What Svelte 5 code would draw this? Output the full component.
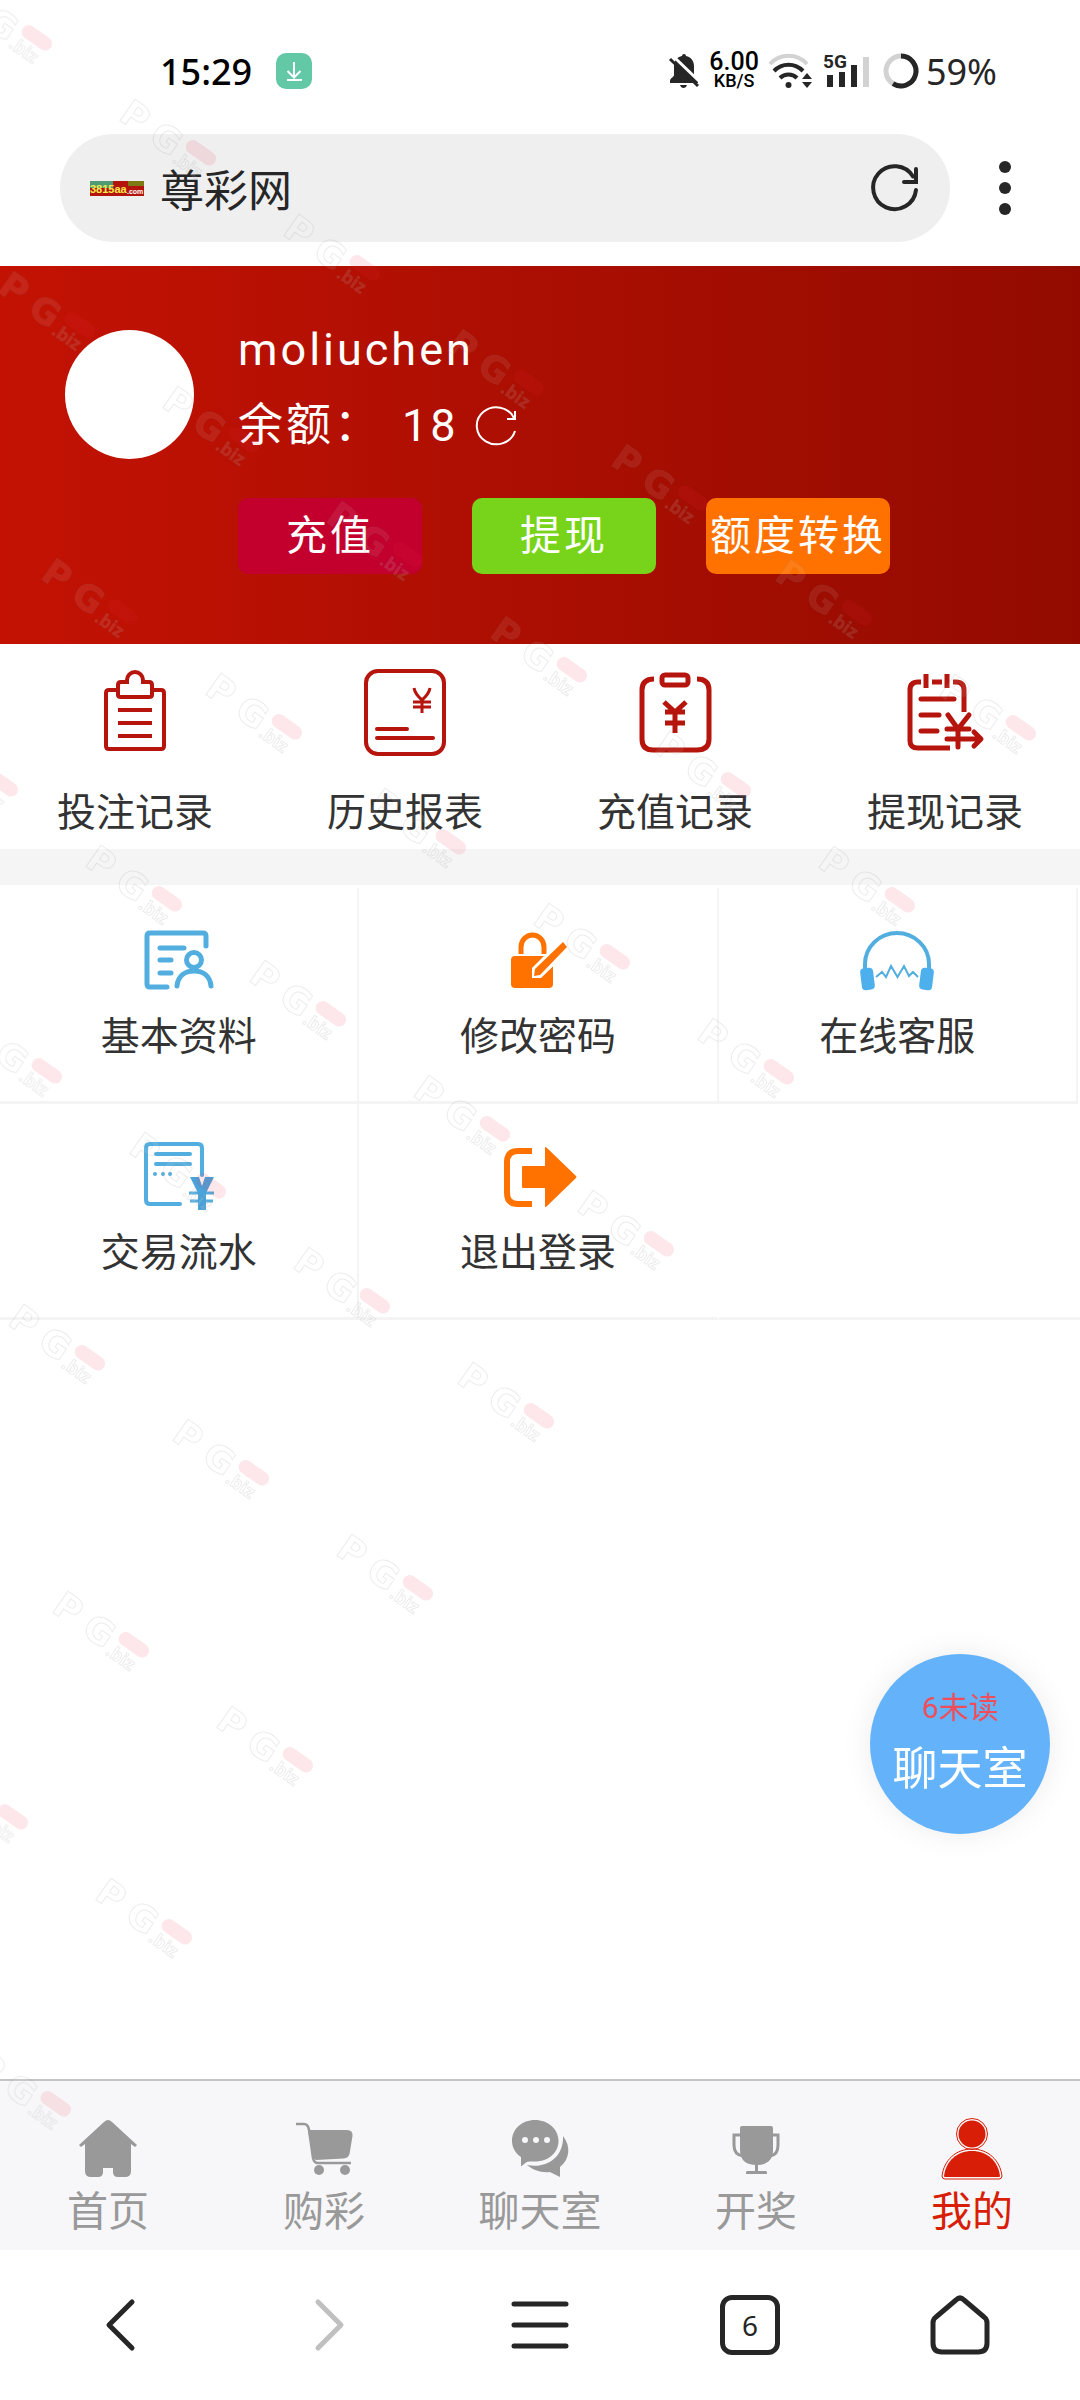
<script lang="ts">
	const username = 'moliuchen';
	const balance = 18;
	const unread = 6;
	const openTabs = 6;

	const actions = [
		{ label: '充值', kind: 'deposit' },
		{ label: '提现', kind: 'withdraw' },
		{ label: '额度转换', kind: 'transfer' }
	];

	const records = [
		{ label: '投注记录', icon: 'bets' },
		{ label: '历史报表', icon: 'report' },
		{ label: '充值记录', icon: 'deposits' },
		{ label: '提现记录', icon: 'withdrawals' }
	];

	const services = [
		{ label: '基本资料', icon: 'profile' },
		{ label: '修改密码', icon: 'password' },
		{ label: '在线客服', icon: 'support' },
		{ label: '交易流水', icon: 'flow' },
		{ label: '退出登录', icon: 'logout' }
	];

	const tabs = [
		{ label: '首页', icon: 'home' },
		{ label: '购彩', icon: 'cart' },
		{ label: '聊天室', icon: 'chat' },
		{ label: '开奖', icon: 'prize' },
		{ label: '我的', icon: 'mine' }
	];
	let current = 'mine';

	// watermark rows: [x, y, how many], every next mark is 164 right and 115 down
	const stampRows = [
		[-43, -12, 7],
		[0, 275, 6],
		[43, 562, 5],
		[-77, 734, 5],
		[-33, 1021, 4],
		[10, 1308, 3],
		[54, 1595, 2],
		[-67, 1767, 2],
		[-24, 2054, 1]
	];
	const stamps = stampRows.flatMap(([x, y, count]) =>
		Array.from({ length: count }, (_, i) => ({ x: x + i * 164, y: y + i * 115 }))
	);
</script>

<div class="page" lang="zh-CN">
	<div class="status">
		<span class="time">15:29</span>
		<svg class="download" width="36" height="36" viewBox="0 0 36 36" aria-hidden="true">
			<rect width="36" height="36" rx="10" fill="#62c8a6" />
			<path d="M18 9v15M11.5 18l6.500 6.500 6.500-6.500M11 27h15" fill="none" stroke="#fff" stroke-width="2" />
		</svg>
		<div class="signals">
			<svg width="32" height="36" viewBox="0 0 32 36" aria-hidden="true">
				<path d="M16 1a2 2 0 0 1 2 2c5 1 8 5 8 10v9c0 2 4 3 4 6v2H2v-2c0-3 4-4 4-6v-9c0-5 3-9 8-10a2 2 0 0 1 2-2zM12 32h7q-1 3-3.500 3t-3.500-3z" fill="#262626" />
				<path d="M5 3l28 27" stroke="#fff" stroke-width="3" />
				<path d="M2 6l28 27" stroke="#262626" stroke-width="3" />
			</svg>
			<div class="speed">
				<span class="rate">6.00</span>
				<span class="unit">KB/S</span>
			</div>
			<svg width="46" height="36" viewBox="0 0 46 36" fill="none" stroke="#262626" stroke-width="4" aria-hidden="true">
				<path d="M2 11a25 25 0 0 1 37 0" stroke="#d2d2d2" />
				<path d="M6 18a20 20 0 0 1 29 0M12 25a12 12 0 0 1 17 0" />
				<circle cx="20.500" cy="32" r="3" fill="#262626" stroke="none" />
				<path d="M34 26l5-6 5 6zM34 29l5 6 5-6z" fill="#262626" stroke="none" />
			</svg>
			<svg width="48" height="36" viewBox="0 0 48 36" aria-hidden="true">
				<text x="0" y="15" class="network">5G</text>
				<path d="M7 22v12M19 19v15M31 12v22" stroke="#262626" stroke-width="6" />
				<path d="M43 4v30" stroke="#d2d2d2" stroke-width="6" />
			</svg>
			<svg class="ring" width="36" height="36" viewBox="0 0 36 36" fill="none" stroke-width="5" aria-hidden="true">
				<circle cx="18" cy="18" r="15" stroke="#d2d2d2" />
				<path d="M18 3a15 15 0 1 1-8 27.700" stroke="#262626" />
			</svg>
			<span class="battery">59%</span>
		</div>
	</div>

	<div class="address">
		<div class="urlbar">
			<svg width="54" height="16" viewBox="0 0 54 16" aria-hidden="true">
				<rect width="54" height="15" y="1" fill="#b3140c" />
				<rect width="23" height="7" y="1" fill="#4f9c74" />
				<rect width="16" height="5" x="38" y="1" fill="#7d7a16" />
				<text x="0" y="13" class="favtext" fill="#f7e948">3815aa</text>
				<text x="37" y="14" class="favsmall" fill="#fff">.com</text>
			</svg>
			<span class="title">尊彩网</span>
			<button class="bare" aria-label="刷新页面">
				<svg width="48" height="48" viewBox="0 0 48 48" fill="none" stroke="#262626" stroke-width="4" stroke-linecap="round">
					<path d="M46 26a21.500 21.500 0 1 1-3-13.500" />
					<path d="M46 5v13H34" />
				</svg>
			</button>
		</div>
		<button class="bare more" aria-label="更多">
			<svg width="12" height="56" viewBox="0 0 12 56" fill="#262626">
				<circle cx="6" cy="7" r="6" />
				<circle cx="6" cy="28" r="6" />
				<circle cx="6" cy="49" r="6" />
			</svg>
		</button>
	</div>

	<header class="user">
		<div class="avatar"></div>
		<div class="info">
			<div class="line">{username}</div>
			<div class="line">
				<span>余额：</span>
				<span class="amount">{balance}</span>
				<button class="bare" aria-label="刷新余额">
					<svg width="42" height="42" viewBox="0 0 42 42" fill="none" stroke="#fff" stroke-width="2">
						<path d="M40 26a19.500 18.500 0 1 1-1-13" />
						<path d="M40 6v8h-8" />
					</svg>
				</button>
			</div>
			<div class="actions">
				{#each actions as action}
					<button class="action {action.kind}">{action.label}</button>
				{/each}
			</div>
		</div>
	</header>

	<nav class="records">
		{#each records as record}
			<a href="#{record.icon}">
				<svg width="84" height="90" viewBox="0 0 84 90" fill="none" stroke="#b5150c" stroke-width="4" aria-hidden="true">
					{#if record.icon === 'bets'}
						<path d="M25 23h-9q-3 0-3 3v53q0 3 3 3h52q3 0 3-3v-53q0-3-3-3h-9" />
						<path d="M34 15h-6q-3 0-3 3v10q0 2 3 2h28q3 0 3-2v-10q0-3-3-3h-6v-2a8 8 0 0 0-16 0z" />
						<path d="M25 43h34M25 56h34M25 69h34" />
					{:else if record.icon === 'report'}
						<rect x="3" y="4" width="78" height="83" rx="12" />
						<path d="M14 62h30M14 71h56" stroke-linecap="round" />
						<path d="M51 21q1 6 8 12 7-6 8-12M59 33v13M50 35h18M50 40h18" stroke-width="3" />
					{:else if record.icon === 'deposits'}
						<g stroke-width="5">
							<path d="M21 12q-12 0-12 11v49q0 11 11 11h44q12 0 12-11v-49q0-11-12-11" />
							<rect x="29" y="8" width="26" height="10" rx="3" />
							<path d="M31 35l11 10 11-10M42 45v21M32 45h20M32 56h20" />
						</g>
					{:else}
						<g stroke-width="5">
							<path d="M18 15h-3q-8 0-8 8v51q0 7 8 7h32M29 15h10M50 15h3q8 0 8 8v22" />
							<path d="M23 7v14M44 7v14" />
							<path d="M18 32h33M18 48h18M18 64h16" stroke-linecap="round" />
							<path d="M45 48l10 14 11-14M55 62v18M44 62h22M44 72h33M71 65l7 7-7 7" stroke-linecap="round" stroke-linejoin="round" />
						</g>
					{/if}
				</svg>
				<span>{record.label}</span>
			</a>
		{/each}
	</nav>

	<nav class="services">
		{#each services as service}
			<a href="#{service.icon}">
				<svg width="84" height="72" viewBox="0 0 84 72" fill="none" stroke="#53aee0" stroke-width="5" aria-hidden="true">
					{#if service.icon === 'profile'}
						<path d="M69 22V12q0-3-3-3H13q-3 0-3 3v48q0 3 3 3h17M23 24h24M23 36h11M23 49h11" stroke-linecap="round" />
						<circle cx="57" cy="36" r="7.500" />
						<path d="M40 62c1-10 8-15 17-15s16 5 17 15" stroke-linecap="round" />
					{:else if service.icon === 'password'}
						<path d="M25 30V23a11.500 12 0 0 1 23 0v7" stroke="#ff7200" />
						<rect x="15" y="32" width="42" height="32" rx="4" fill="#ff7200" stroke="none" />
						<path d="M36 54v-10L65 15l10 10-30 29z" fill="#fff" stroke="none" />
						<path d="M38 52l1-7L67 18l4 5-27 28z" fill="#ff7200" stroke="none" />
					{:else if service.icon === 'support'}
						<path d="M10 46v-6a32 31 0 0 1 64 0v6" stroke-width="4" />
						<rect x="7" y="45" width="11" height="20" rx="3" fill="#4db0ec" stroke="#4db0ec" stroke-width="2" transform="rotate(-7 12 55)" />
						<rect x="66" y="45" width="11" height="20" rx="3" fill="#4db0ec" stroke="#4db0ec" stroke-width="2" transform="rotate(7 72 55)" />
						<path d="M21 53l6-5 4 5 5-11 6.500 11 6.500-11 5 10 4-4 5 5" stroke-width="2" />
					{:else if service.icon === 'flow'}
						<g stroke-width="4">
							<path d="M65 35V8q0-4-4-4H13q-4 0-4 4v52q0 4 4 4h30M19 14h34M19 24h34" stroke-linecap="round" />
							<path d="M52 53h25M53 61h23" stroke-width="3" />
						</g>
						<path d="M53 37h9l3 9 3-9h9l-8 16v17h-8V53z" fill="#4aa3da" stroke="none" />
						<g fill="#53aee0" stroke="none">
							<circle cx="18" cy="34" r="2" />
							<circle cx="26" cy="34" r="2" />
							<circle cx="33" cy="34" r="2" />
						</g>
					{:else}
						<path d="M36 11H22q-11 0-11 11v31q0 11 11 11h14" stroke="#ff7200" stroke-width="6" />
						<path d="M27 26h22V8q0-2 2 0l29 28q1 1 0 2L51 66q-2 2-2 0V48H27q-1 0-1-1V27q0-1 1-1z" fill="#ff7200" stroke="none" />
					{/if}
				</svg>
				<span>{service.label}</span>
			</a>
		{/each}
	</nav>

	<button class="chatroom">
		<span class="unread">{unread}未读</span>
		<span class="room">聊天室</span>
	</button>

	<nav class="tabbar">
		{#each tabs as tab}
			<a href="#{tab.icon}" class:active={tab.icon === current} on:click={() => (current = tab.icon)}>
				<svg width="64" height="64" viewBox="0 0 64 64" fill="currentColor" aria-hidden="true">
					{#if tab.icon === 'home'}
						<path d="M32 4q2 0 4 2l25 23-2 2-4-3v27q0 6-6 6h-7q-5 0-5-5v-4H27v4q0 5-5 5h-7q-6 0-6-6V28l-4 3-2-2L28 6q2-2 4-2z" />
					{:else if tab.icon === 'cart'}
						<path d="M16 14h39q6 0 5.500 6l-3 18q-1 4-6 4.500L24 44l-3-2z" />
						<path d="M4 8h8q4 0 5 6l4 28q1 5 5 5h33" fill="none" stroke="currentColor" stroke-width="2.500" />
						<circle cx="27" cy="54" r="5" />
						<circle cx="53" cy="54" r="5" />
					{:else if tab.icon === 'chat'}
						<path d="M55 20c8 10 7 23-3 31v10l-10-5c-9 1-17-2-23-7 20 4 37-8 36-29z" />
						<path d="M27 4c13 0 23.500 9 23.500 21S40 45.500 27 45.500c-4 0-7-.500-9 1l-5 4V41C7 37 4 31 4 25 4 13 14 4 27 4z" />
						<g fill="#f7f7f9">
							<circle cx="17" cy="24" r="3" />
							<circle cx="28" cy="24" r="3" />
							<circle cx="39" cy="24" r="3" />
						</g>
					{:else if tab.icon === 'prize'}
						<path d="M16 12q0-2 2-2h29q2 0 2 2v22q0 14-15 15v6h8q1 0 1 2v1H22v-1q0-2 1-2h8v-6q-15-1-15-15z" />
						<path d="M16 19h-6v10q0 10 9 11M49 19h5v10q0 10-8 11" fill="none" stroke="currentColor" stroke-width="3" />
					{:else}
						<circle cx="32" cy="18" r="13.500" />
						<path d="M4 60c2-15 13-25 28-25s26 10 28 25q0 1-1 1H5q-1 0-1-1z" />
						<g fill="none" stroke="currentColor">
							<circle cx="32" cy="18" r="15.500" />
							<path d="M2 60c2-16 14-27 30-27s28 11 30 27q0 3-3 3H5q-3 0-3-3z" />
						</g>
					{/if}
				</svg>
				<span>{tab.label}</span>
			</a>
		{/each}
	</nav>

	<div class="browser">
		<button class="bare" aria-label="后退">
			<svg width="60" height="60" viewBox="0 0 60 60"><path d="M42 7L19 30l23 23" /></svg>
		</button>
		<button class="bare" aria-label="前进" disabled>
			<svg width="60" height="60" viewBox="0 0 60 60"><path d="M18 7l23 23-23 23" /></svg>
		</button>
		<button class="bare" aria-label="菜单">
			<svg width="60" height="60" viewBox="0 0 60 60"><path d="M4 9h52M4 30h52M4 51h52" /></svg>
		</button>
		<button class="bare" aria-label="标签页">
			<span class="count">{openTabs}</span>
		</button>
		<button class="bare" aria-label="主页">
			<svg width="60" height="60" viewBox="0 0 60 60">
				<path d="M26 5q4-4 8 0l20 17q3 2 3 6v20q0 9-9 9H12q-9 0-9-9V28q0-4 3-6z" />
			</svg>
		</button>
	</div>

	<svg class="stamps" aria-hidden="true">
		{#each stamps as stamp}
			<g transform="translate({stamp.x} {stamp.y}) rotate(35)">
				<text x="6" y="15" class="pg">P</text>
				<text x="43" y="16" class="pg">G</text>
				<rect x="77" y="-12" width="34" height="14" rx="7" fill="#f0203c" fill-opacity="0.110" />
				<text x="75" y="19" class="biz">.biz</text>
			</g>
		{/each}
	</svg>
</div>

<style>
	:global(body) {
		margin: 0;
		background: #fff;
	}

	.page {
		position: relative;
		display: flex;
		flex-direction: column;
		min-height: 100vh;
		overflow: hidden;
		color: #333;
		font-family: Roboto, 'Noto Sans CJK SC', sans-serif;
		font-size: 39px;
	}

	svg {
		display: block;
		flex: none;
		overflow: visible;
	}

	a {
		color: inherit;
		text-decoration: none;
	}

	button {
		font: inherit;
		cursor: pointer;
	}

	.bare {
		display: flex;
		padding: 0;
		border: none;
		background: none;
	}

	/* phone status bar */
	.status {
		display: flex;
		align-items: center;
		height: 126px;
		padding: 8px 83px 0 160px;
		color: #262626;
	}

	.time {
		color: #000;
		font-family: 'Noto Sans', sans-serif;
		font-size: 36px;
		font-weight: 500;
	}

	.download {
		margin-left: 24px;
	}

	.signals {
		display: flex;
		align-items: center;
		gap: 9px;
		margin-left: auto;
	}

	.speed {
		display: flex;
		flex-direction: column;
		align-items: center;
		color: #000;
		font-weight: 500;
	}

	.rate {
		font-size: 25px;
		line-height: 20px;
	}

	.unit {
		font-size: 18px;
		line-height: 18px;
	}

	.network {
		font-size: 19px;
		font-weight: 700;
		fill: #262626;
	}

	.ring {
		margin-left: 3px;
	}

	.battery {
		margin-left: -2px;
		font-family: 'Noto Sans', sans-serif;
		font-size: 36px;
	}

	/* address bar */
	.address {
		display: flex;
		align-items: center;
		padding: 0 69px 24px 60px;
	}

	.urlbar {
		display: flex;
		flex: 1;
		align-items: center;
		height: 108px;
		padding: 0 32px 0 30px;
		border-radius: 54px;
		background: #efefef;
	}

	.favtext {
		font: bold 11px 'Liberation Sans', sans-serif;
	}

	.favsmall {
		font: bold 7px 'Liberation Sans', sans-serif;
	}

	.title {
		flex: 1;
		margin-left: 16px;
		color: #262626;
		font-size: 44px;
	}

	.more {
		margin-left: 49px;
	}

	/* account header */
	.user {
		display: flex;
		padding: 54px 65px 70px;
		background: linear-gradient(to right, #c31204, #930b00);
		color: #fff;
		letter-spacing: 3px;
	}

	.avatar {
		width: 129px;
		height: 129px;
		margin-top: 10px;
		border-radius: 50%;
		background: #fff;
	}

	.info {
		margin-left: 44px;
	}

	.line {
		display: flex;
		align-items: center;
		margin-bottom: 16px;
		font-size: 45px;
		line-height: 60px;
	}

	.amount {
		margin: 0 16px 0 20px;
	}

	.actions {
		display: flex;
		gap: 50px;
		margin-top: 42px;
	}

	.action {
		width: 184px;
		height: 76px;
		padding: 0;
		border: none;
		border-radius: 10px;
		color: #fff;
		font-size: 41px;
		line-height: 76px;
		letter-spacing: 3px;
		white-space: nowrap;
	}

	.deposit {
		background: #c3002d;
	}

	.withdraw {
		background: #78d41a;
	}

	.transfer {
		background: #ff7200;
	}

	/* record shortcuts */
	.records {
		display: grid;
		grid-template-columns: repeat(4, 1fr);
		padding: 23px 0 8px;
		border-bottom: 36px solid #f5f5f5;
	}

	.records a {
		display: flex;
		flex-direction: column;
		align-items: center;
		gap: 28px;
		line-height: 56px;
	}

	/* service grid */
	.services {
		display: grid;
		grid-template-columns: repeat(3, 1fr);
		padding: 3px 2px 0 0;
	}

	.services a {
		display: flex;
		flex-direction: column;
		align-items: center;
		gap: 13px;
		box-sizing: border-box;
		height: 216px;
		padding-top: 36px;
		border-right: 2px solid #f4f4f4;
		border-bottom: 3px solid #f4f4f4;
		line-height: 56px;
	}

	.services a:last-child {
		border-right-color: transparent;
	}

	.services::after {
		content: '';
		margin-right: -2px;
		border-bottom: 3px solid #f4f4f4;
	}

	/* floating chat button */
	.chatroom {
		position: fixed;
		right: 30px;
		bottom: 566px;
		display: flex;
		flex-direction: column;
		align-items: center;
		justify-content: center;
		width: 180px;
		height: 180px;
		padding: 0;
		border: none;
		border-radius: 50%;
		background: #64b3fa;
		box-shadow: 0 0 30px rgba(0, 0, 0, 0.08);
		color: #fff;
	}

	.unread {
		color: #f04d5a;
		font-size: 30px;
		line-height: 52px;
	}

	.room {
		font-size: 45px;
		line-height: 72px;
	}

	/* site tab bar */
	.tabbar {
		display: grid;
		grid-template-columns: repeat(5, 1fr);
		margin-top: auto;
		padding: 35px 0 10px;
		border-top: 2px solid #c4c4c4;
		background: #f7f7f9;
		color: #999;
		font-size: 41px;
	}

	.tabbar a {
		display: flex;
		flex-direction: column;
		align-items: center;
		gap: 4px;
		line-height: 56px;
	}

	.tabbar .active {
		color: #d81e06;
	}

	/* browser toolbar */
	.browser {
		display: grid;
		grid-template-columns: repeat(5, 1fr);
		align-items: center;
		justify-items: center;
		height: 150px;
		padding: 0 15px;
	}

	.browser svg {
		fill: none;
		stroke: #262626;
		stroke-width: 5;
		stroke-linecap: round;
		stroke-linejoin: round;
	}

	.browser button:disabled svg {
		stroke: #c0c0c0;
	}

	.count {
		box-sizing: border-box;
		width: 60px;
		height: 60px;
		border: 5px solid #262626;
		border-radius: 12px;
		color: #262626;
		font-family: 'Noto Sans', sans-serif;
		font-size: 28px;
		line-height: 50px;
	}

	.stamps {
		position: absolute;
		inset: 0;
		width: 100%;
		height: 100%;
		pointer-events: none;
	}

	.pg {
		font: bold 36px 'DejaVu Sans', sans-serif;
		fill: rgba(255, 255, 255, 0.08);
		stroke: rgba(120, 120, 120, 0.14);
	}

	.biz {
		font: bold 18px 'Open Sans', sans-serif;
		fill: rgba(255, 255, 255, 0.1);
		stroke: rgba(120, 120, 120, 0.14);
	}
</style>
